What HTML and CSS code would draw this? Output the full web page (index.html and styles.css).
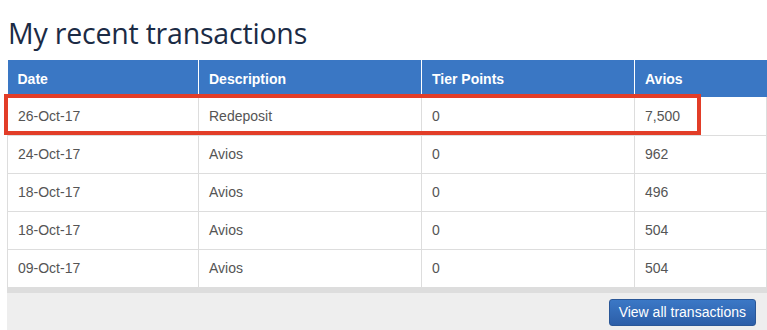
FILE: index.html
```html
<!DOCTYPE html>
<html lang="en">
<head>
    <meta charset="UTF-8">
    <title>My recent transactions</title>
    <link rel="stylesheet" href="styles.css">
</head>
<body>
    <h1>My recent transactions</h1>

    <div class="transactions">
        <table>
            <thead>
                <tr>
                    <th class="col-date">Date</th>
                    <th class="col-desc">Description</th>
                    <th class="col-tier">Tier Points</th>
                    <th class="col-avios">Avios</th>
                </tr>
            </thead>
            <tbody>
                <tr>
                    <td>26-Oct-17</td>
                    <td>Redeposit</td>
                    <td>0</td>
                    <td>7,500</td>
                </tr>
                <tr>
                    <td>24-Oct-17</td>
                    <td>Avios</td>
                    <td>0</td>
                    <td>962</td>
                </tr>
                <tr>
                    <td>18-Oct-17</td>
                    <td>Avios</td>
                    <td>0</td>
                    <td>496</td>
                </tr>
                <tr>
                    <td>18-Oct-17</td>
                    <td>Avios</td>
                    <td>0</td>
                    <td>504</td>
                </tr>
                <tr>
                    <td>09-Oct-17</td>
                    <td>Avios</td>
                    <td>0</td>
                    <td>504</td>
                </tr>
            </tbody>
        </table>
        <!-- highlight around the first row -->
        <div class="highlight"></div>

        <div class="table-footer">
            <a class="btn" href="#">View all transactions</a>
        </div>
    </div>
</body>
</html>
```

FILE: styles.css
```css
body {
    margin: 0;
    font-family: "Liberation Sans", Arial, sans-serif;
    background-color: #fff;
}
h1 {
    font-family: "Open Sans", sans-serif;
    font-weight: 400;
    font-size: 28.5px;
    color: #1b2b45;
    margin: 0;
    padding: 14px 0 0 8px;
    height: 60px;
    box-sizing: border-box;
    letter-spacing: -0.2px;
}
.transactions {
    position: relative;
    margin-left: 7px;
    width: 760px;
}
table {
    width: 100%;
    border-collapse: collapse;
    table-layout: fixed;
    font-size: 14px;
}
th {
    background-color: #3a77c4;
    color: #fff;
    font-weight: bold;
    text-align: left;
    height: 37px;
    padding: 0 10px;
    border-left: 1px solid #fff;
    box-sizing: border-box;
}
th:first-child {
    border-left: none;
}
td {
    color: #555;
    height: 38px;
    padding: 0 10px;
    border: 1px solid #ddd;
    border-top: none;
    box-sizing: border-box;
}
.col-date { width: 191px; }
.col-desc { width: 223px; }
.col-tier { width: 213px; }
.highlight {
    position: absolute;
    left: -3px;
    top: 34px;
    width: 689px;
    height: 33px;
    border: 4px solid #e23d28;
}
.table-footer {
    background-color: #eee;
    border-top: 5px solid #ddd;
    height: 43px;
    box-sizing: border-box;
    display: flex;
    justify-content: flex-end;
    align-items: flex-start;
    padding: 6px 11px 0 0;
}
.btn {
    display: inline-block;
    background: linear-gradient(#3b78c6, #2c5ea8);
    border: 1px solid #2a5797;
    border-radius: 3px;
    color: #fff;
    font-size: 14px;
    text-decoration: none;
    padding: 4px 9px 5px;
}
```
